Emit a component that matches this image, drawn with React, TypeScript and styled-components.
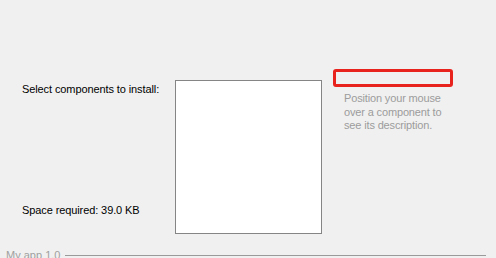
import React, { FC } from 'react';
import styled, { createGlobalStyle } from 'styled-components';

const GlobalStyle = createGlobalStyle`
  html, body {
    margin: 0;
    padding: 0;
    background: #f0f0f0;
  }
  body {
    width: 496px;
    height: 258px;
    overflow: hidden;
    font-family: "Liberation Sans", Arial, sans-serif;
    font-size: 11px;
    color: #000;
  }
`;

const App: FC = () => {
  return (
    <Page>
      <GlobalStyle />
      <Header />
      <Body>
        <LabelColumn>
          <Label>Select components to install:</Label>
          <Label>Space required: 39.0 KB</Label>
        </LabelColumn>
        <ComponentList />
        <DescriptionPanel>
          <DescriptionTitle />
          <DescriptionText>
            Position your mouse
            <br />
            over a component to
            <br />
            see its description.
          </DescriptionText>
        </DescriptionPanel>
      </Body>
      <Branding>
        <BrandingText>My app 1.0</BrandingText>
        <BrandingLine />
      </Branding>
    </Page>
  );
};

export default App;

const Page = styled.div`
  width: 496px;
  height: 258px;
  overflow: hidden;
  display: flex;
  flex-direction: column;
`;

const Header = styled.div`
  height: 69px;
  flex-shrink: 0;
`;

const Body = styled.div`
  display: flex;
  flex-direction: row;
  align-items: flex-start;
  height: 180px;
  flex-shrink: 0;
`;

const LabelColumn = styled.div`
  width: 175px;
  flex-shrink: 0;
  height: 154px;
  margin-top: 11px;
  padding-left: 22px;
  box-sizing: border-box;
  display: flex;
  flex-direction: column;
  justify-content: space-between;
`;

const Label = styled.div`
  line-height: 13px;
  padding-top: 3px;
  padding-bottom: 17px;
  letter-spacing: -0.1px;
`;

const ComponentList = styled.div`
  width: 147px;
  height: 154px;
  flex-shrink: 0;
  margin-top: 11px;
  box-sizing: border-box;
  background: #fff;
  border: 1px solid #858585;
`;

const DescriptionPanel = styled.div`
  margin-left: 11px;
  display: flex;
  flex-direction: column;
`;

const DescriptionTitle = styled.div`
  width: 120px;
  height: 18px;
  box-sizing: border-box;
  border: 3px solid #e8231e;
  border-radius: 3px;
`;

const DescriptionText = styled.div`
  color: #9c9c9c;
  line-height: 13.5px;
  padding-left: 11px;
  margin-top: 5px;
  letter-spacing: -0.15px;
`;

const Branding = styled.div`
  display: flex;
  align-items: center;
  padding-left: 6px;
  padding-right: 10px;
  flex-shrink: 0;
`;

const BrandingText = styled.span`
  color: #a0a0a0;
  line-height: 13px;
  margin-right: 5px;
`;

const BrandingLine = styled.div`
  flex: 1;
  border-top: 1px solid #9a9a9a;
`;
